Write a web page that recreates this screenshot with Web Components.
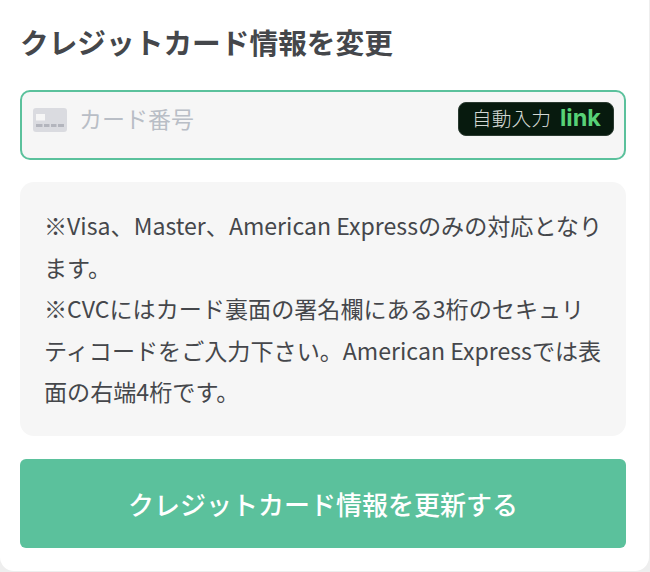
<!DOCTYPE html>
<html lang="ja">
<head>
<meta charset="utf-8">
<style>
  html, body { margin: 0; padding: 0; background: #eeeeee; }
  body { width: 650px; height: 572px; overflow: hidden; font-family: "Noto Sans CJK JP", "Noto Sans", sans-serif; }
</style>
</head>
<body>
<card-form>
  <span slot="title">クレジットカード情報を変更</span>
  <card-input placeholder="カード番号"></card-input>
  <note-box>
    <p>※Visa、Master、American Expressのみの対応となります。</p>
    <p>※CVCにはカード裏面の署名欄にある3桁のセキュリティコードをご入力下さい。American Expressでは表面の右端4桁です。</p>
  </note-box>
  <submit-button>クレジットカード情報を更新する</submit-button>
</card-form>

<script>
class CardForm extends HTMLElement {
  constructor() {
    super();
    this.attachShadow({ mode: 'open' });
    this.shadowRoot.innerHTML = `
      <style>
        :host {
          display: flex;
          flex-direction: column;
          box-sizing: border-box;
          width: 649px;
          height: 571px;
          padding: 0 23px 23px 20px;
          background: #fff;
          border-radius: 0 0 14px 14px;
        }
        h2 {
          margin: 0;
          height: 90px;
          box-sizing: border-box;
          padding-top: 20px;
          font-size: 28.7px;
          line-height: 44px;
          font-weight: 700;
          color: #45474b;
        }
      </style>
      <h2><slot name="title"></slot></h2>
      <slot></slot>
    `;
  }
}

class CardInput extends HTMLElement {
  constructor() {
    super();
    this.attachShadow({ mode: 'open' });
    this.shadowRoot.innerHTML = `
      <style>
        :host {
          display: flex;
          align-items: center;
          box-sizing: border-box;
          height: 70px;
          padding: 0 10px 13px 11px;
          background: #f6f6f6;
          border: 2px solid #5bc19c;
          border-radius: 10px;
        }
        svg { flex: none; display: block; margin: 3px 12px 0 0; }
        .placeholder {
          flex: 1;
          font-size: 23px;
          line-height: 30px;
          color: #b9bec6;
          padding-bottom: 2px;
        }
        .autofill {
          flex: none;
          display: flex;
          align-items: center;
          gap: 9px;
          box-sizing: border-box;
          height: 34px;
          padding: 0 12px 3px 13px;
          background: #071a0e;
          border: 1px solid #2a3a30;
          border-radius: 8px;
          color: #d3d8d4;
          font-size: 19.8px;
          font-weight: 300;
        }
        .autofill b {
          font-family: "Inter", "Noto Sans", sans-serif;
          font-size: 23.5px;
          font-weight: 700;
          color: #58d177;
        }
      </style>
      <svg width="34" height="24" viewBox="0 0 34 24">
        <rect width="34" height="24" rx="3" fill="#dadbe0"/>
        <rect x="3" y="6" width="9" height="6.5" fill="#f6f6f6"/>
        <g fill="#b3b5bd">
          <rect x="3" y="16" width="6.5" height="3"/>
          <rect x="11" y="16" width="5.5" height="3"/>
          <rect x="18" y="16" width="5.5" height="3"/>
          <rect x="25" y="16" width="6" height="3"/>
        </g>
      </svg>
      <span class="placeholder"></span>
      <span class="autofill">自動入力<b>link</b></span>
    `;
  }

  connectedCallback() {
    this.shadowRoot.querySelector('.placeholder').textContent = this.getAttribute('placeholder');
  }
}

class NoteBox extends HTMLElement {
  constructor() {
    super();
    this.attachShadow({ mode: 'open' });
    this.shadowRoot.innerHTML = `
      <style>
        :host {
          display: block;
          box-sizing: border-box;
          height: 254px;
          margin-top: 22px;
          padding: 23px 23px 0 24px;
          background: #f6f6f6;
          border-radius: 14px;
          font-size: 23.1px;
          line-height: 41.5px;
          color: #45474b;
        }
        ::slotted(p) { margin: 0; }
      </style>
      <slot></slot>
    `;
  }
}

class SubmitButton extends HTMLElement {
  constructor() {
    super();
    this.attachShadow({ mode: 'open' });
    this.shadowRoot.innerHTML = `
      <style>
        :host {
          display: flex;
          align-items: center;
          justify-content: center;
          height: 89px;
          margin-top: 23px;
          background: #5bc19c;
          border-radius: 6px;
          color: #fff;
          font-size: 26px;
          font-weight: 500;
        }
      </style>
      <slot></slot>
    `;
  }
}

customElements.define('card-form', CardForm);
customElements.define('card-input', CardInput);
customElements.define('note-box', NoteBox);
customElements.define('submit-button', SubmitButton);
</script>
</body>
</html>
